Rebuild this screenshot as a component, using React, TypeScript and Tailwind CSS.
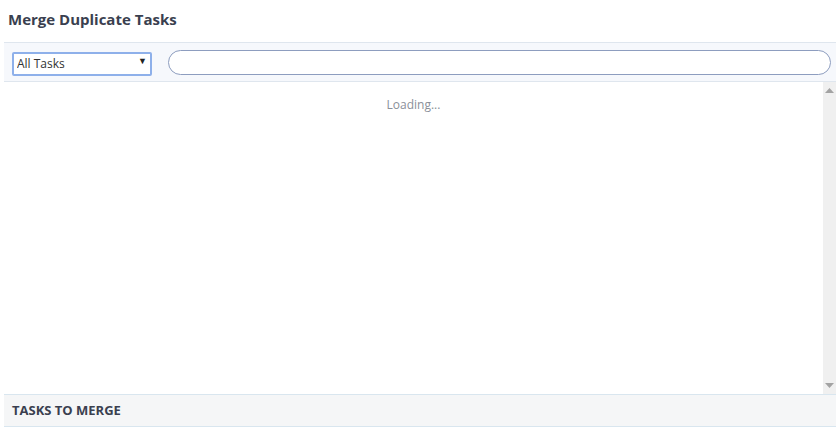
import { useState } from "react";

export default function App() {
  const [filter, setFilter] = useState("all");
  const [query, setQuery] = useState("");

  return (
    <div
      className="w-[836px] h-[438px] bg-white text-[#3b4151] overflow-hidden"
      style={{ fontFamily: '"Open Sans", "Noto Sans", sans-serif' }}
    >
      {/* Header */}
      <div className="h-[42px] pl-[8px] pt-[8px]">
        <h1 className="text-[15px] font-bold leading-[22px] text-[#3a3f4f]">Merge Duplicate Tasks</h1>
      </div>

      {/* Toolbar */}
      <div className="ml-[4px] h-[40px] bg-[#f6f8fc] border-y border-[#dfe6ee] flex items-center pl-[8px] pr-[5px] gap-[16px]">
        <div className="relative w-[140px] h-[24px]">
          <select
            value={filter}
            onChange={(e) => setFilter(e.target.value)}
            className="appearance-none w-full h-full bg-white border-2 border-[#8eb0ea] rounded-[2px] pl-[3px] text-[12px] text-[#333] outline-none"
          >
            <option value="all">All Tasks</option>
            <option value="open">Open Tasks</option>
          </select>
          <span className="pointer-events-none absolute right-[5px] top-[4px] text-[9px] text-[#222]">▼</span>
        </div>
        <input
          type="text"
          value={query}
          onChange={(e) => setQuery(e.target.value)}
          className="flex-1 h-[25px] bg-white border border-[#8d9dbf] rounded-full px-3 text-[13px] outline-none"
        />
      </div>

      {/* List */}
      <div className="ml-[4px] h-[312px] flex">
        <div className="flex-1 flex justify-center pt-[14px]">
          <p className="text-[12px] text-[#8a8f99]">Loading...</p>
        </div>
        <div className="w-[13px] bg-[#f0f0f0] flex flex-col justify-between items-center py-[6px]">
          <svg width="9" height="5" viewBox="0 0 9 5">
            <path d="M0 5 L4.5 0 L9 5 Z" fill="#a3a3a3" />
          </svg>
          <svg width="9" height="5" viewBox="0 0 9 5">
            <path d="M0 0 L4.5 5 L9 0 Z" fill="#a3a3a3" />
          </svg>
        </div>
      </div>

      {/* Footer */}
      <div className="ml-[4px] h-[33px] bg-[#f5f6f7] border-y border-[#d9e6ef] flex items-center pl-[8px]">
        <h2 className="text-[13px] font-bold text-[#3a3f4f]">TASKS TO MERGE</h2>
      </div>
    </div>
  );
}
